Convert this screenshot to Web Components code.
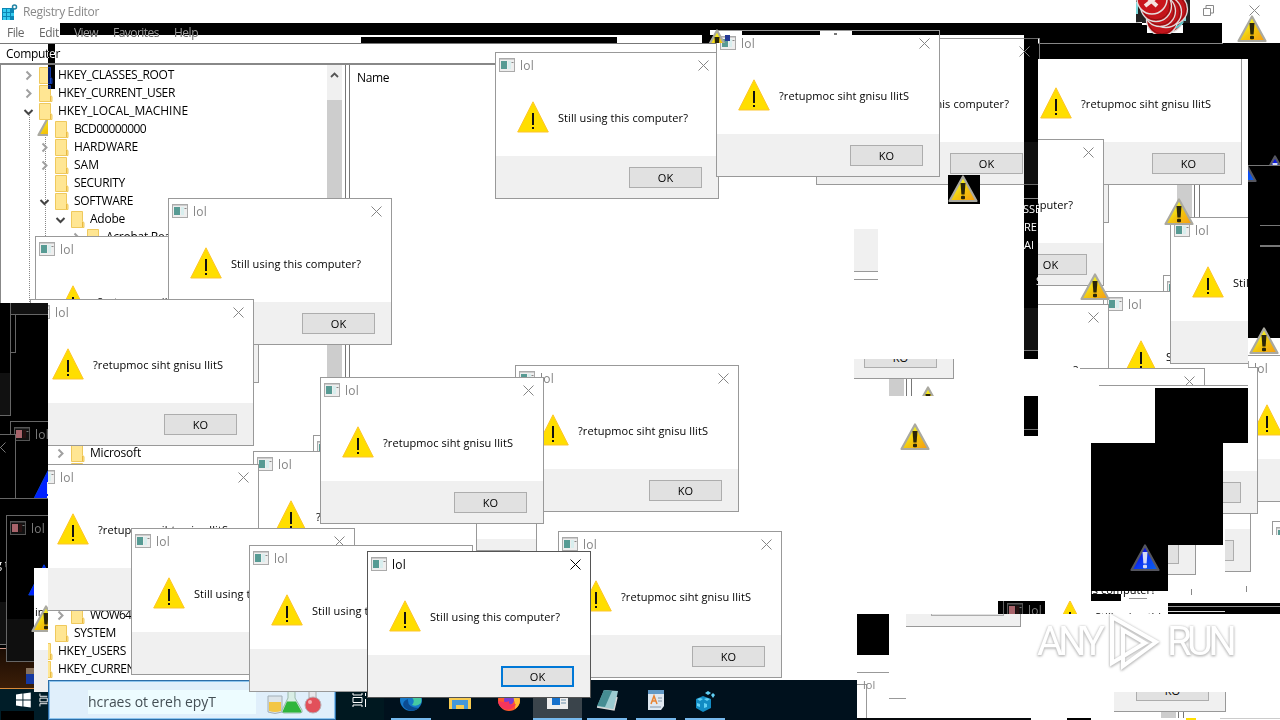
<!DOCTYPE html>
<html lang="en">
<head>
<meta charset="utf-8">
<title>Registry Editor</title>
<style>
  body {
    margin: 0;
    width: 1280px;
    height: 720px;
    overflow: hidden;
    background: #fff;
    font: 12px/16px "Open Sans", "Noto Sans", sans-serif;
    color: #000;
  }
</style>
</head>
<body>
<glitch-desktop></glitch-desktop>

<script>
// Text stretched or tightened to an exact width with letter-spacing
class FitText extends HTMLElement {
  constructor() {
    super();
    this.attachShadow({ mode: 'open' });
    this.shadowRoot.innerHTML = `<style>:host { display: inline-block; flex: none; white-space: nowrap; }</style><slot></slot>`;
  }

  connectedCallback() {
    const target = Number(this.getAttribute('w'));
    const length = this.textContent.length;
    if (!target || !length) return;
    const natural = this.getBoundingClientRect().width;
    this.style.letterSpacing = `${(target - natural) / length}px`;
  }
}
customElements.define('fit-text', FitText);

// Base for everything that sits freely on the desktop.
// x, y, w, h place it; clip="x1 y1 x2 y2" cuts it in desktop coordinates.
class DesktopItem extends HTMLElement {
  constructor() {
    super();
    this.attachShadow({ mode: 'open' });
  }

  connectedCallback() {
    this.render();
    this.place();
  }

  num(name, fallback = 0) {
    return this.hasAttribute(name) ? Number(this.getAttribute(name)) : fallback;
  }

  place() {
    const x = this.num('x');
    const y = this.num('y');
    const w = this.num('w', this.constructor.w);
    const h = this.num('h', this.constructor.h);
    Object.assign(this.style, {
      position: 'absolute',
      left: `${x}px`,
      top: `${y}px`,
      width: `${w}px`,
      height: `${h}px`
    });
    if (this.hasAttribute('clip')) {
      const [x1, y1, x2, y2] = this.getAttribute('clip').split(' ').map(Number);
      const sides = [y1 - y, x + w - x2, y + h - y2, x1 - x].map((n) => `${Math.max(0, n)}px`);
      this.style.clipPath = `inset(${sides.join(' ')})`;
    }
  }
}

// Plain rectangle; "invert" flips whatever is below it
class ScreenPatch extends DesktopItem {
  render() {
    const invert = this.hasAttribute('invert');
    if (invert) this.style.mixBlendMode = 'difference';
    this.shadowRoot.innerHTML = `
      <style>
        :host { display: block; box-sizing: border-box; background: ${invert ? '#fff' : this.getAttribute('fill') || '#000'}; }
      </style>
    `;
  }
}
customElements.define('screen-patch', ScreenPatch);

class TextScrap extends DesktopItem {
  render() {
    this.shadowRoot.innerHTML = `
      <style>
        :host { display: block; font-size: 11px; color: ${this.getAttribute('color') || '#000'}; white-space: nowrap; }
      </style>
      <slot></slot>
    `;
  }
}
TextScrap.w = 150;
TextScrap.h = 16;
customElements.define('text-scrap', TextScrap);

class MessageBox extends DesktopItem {
  render() {
    const active = this.hasAttribute('active');
    const backwards = this.hasAttribute('backwards');
    if (this.hasAttribute('negative')) this.style.filter = 'invert(1)';
    this.shadowRoot.innerHTML = `
      <style>
        :host {
          display: flex;
          flex-direction: column;
          box-sizing: border-box;
          border: 1px solid ${active ? '#555' : '#999'};
          background: #fff;
          overflow: hidden;
        }
        header {
          display: flex;
          align-items: center;
          height: 24px;
          padding: 0 9px 0 3px;
          color: ${active ? '#000' : '#858585'};
        }
        header fit-text { margin: 1px auto 0 5px; }
        main {
          display: flex;
          flex: 1;
          align-items: center;
          padding: 1px 0 0 21px;
          gap: 9px;
          font-size: 11px;
        }
        main fit-text { padding-top: 2px; }
        footer {
          display: flex;
          justify-content: flex-end;
          box-sizing: border-box;
          height: 42px;
          padding: 11px 16px 0 0;
          background: #f0f0f0;
        }
        .button {
          box-sizing: border-box;
          width: 73px;
          height: 21px;
          border: ${active ? '2px solid #0078d7' : '1px solid #adadad'};
          background: #e1e1e1;
          font-size: 11px;
          line-height: ${active ? 18 : 20}px;
          text-align: center;
        }
      </style>
      <header>
        <svg width="16" height="14" viewBox="0 0 16 14">
          <rect x=".5" y=".5" width="15" height="13" fill="#eee" stroke="#aaa"/>
          <path d="M1 1.5h14" stroke="#ccc"/>
          <rect x="2" y="3" width="6" height="8" fill="#579b94"/>
          <rect x="9" y="3" width="3" height="8" fill="#d8eeee"/>
          <path d="M12.500 4.500h2" stroke="#888"/>
        </svg>
        <fit-text w="14">lol</fit-text>
        <svg width="11" height="11" viewBox="0 0 11 11"><path d="M.5.5l10 10M10.500.5l-10 10" stroke="currentColor" fill="none"/></svg>
      </header>
      <main>
        <svg width="32" height="32" viewBox="0 0 32 32">
          <path d="M16 .8L31.300 31H.700z" fill="#ffde00" stroke="#fdc52c"/>
          <path d="M16 12v12M16 26v2" stroke="#111" stroke-width="2"/>
        </svg>
        <fit-text w="130">${backwards ? '?retupmoc siht gnisu llitS' : 'Still using this computer?'}</fit-text>
      </main>
      <footer><div class="button">${backwards ? 'KO' : 'OK'}</div></footer>
    `;
  }
}
MessageBox.w = 224;
MessageBox.h = 147;
customElements.define('message-box', MessageBox);

// Glossy warning triangle, the old cursor-trail icon
class WarningSign extends DesktopItem {
  render() {
    if (this.hasAttribute('negative')) this.style.filter = 'invert(1)';
    this.shadowRoot.innerHTML = `
      <style>
        :host { display: block; }
        svg { display: block; }
      </style>
      <svg width="30" height="28" viewBox="0 0 30 28">
        <defs>
          <linearGradient id="g" x1="0" y1="0" x2="1" y2="1">
            <stop offset=".3" stop-color="#f4ee22"/>
            <stop offset=".55" stop-color="#f3c60c"/>
            <stop offset="1" stop-color="#f59a16"/>
          </linearGradient>
        </defs>
        <path d="M15 1.500L28.500 26H1.500z" fill="url(#g)" stroke="#aaa9a0" stroke-width="2.200" stroke-linejoin="round"/>
        <path d="M12.500 8h5l-.9 11.500h-3.200z" fill="#2a2508"/>
        <rect x="13" y="20.700" width="4" height="3.600" rx="1" fill="#2a2508"/>
      </svg>
    `;
  }
}
WarningSign.w = 30;
WarningSign.h = 28;
customElements.define('warning-sign', WarningSign);

class ErrorPile extends DesktopItem {
  render() {
    const rings = [[33, 17], [27, 20], [37, 9], [31, 12], [25, 11], [21, 6]];
    this.shadowRoot.innerHTML = `
      <style>:host { display: block; overflow: hidden; }</style>
      <svg width="56" height="34" viewBox="0 0 56 34">
        <path d="M1 0h54v23H1z" fill="#222"/>
        <path d="M2 2v12M50 2v19" stroke="#7bd9dc" stroke-width="2"/>
        <path d="M0 22h7v3h5v8h36v-8z" fill="#fff"/>
        ${rings.map(([x, y]) => `<circle cx="${x}" cy="${y}" r="15.500" fill="#c3141b" stroke="#ddd" stroke-width="1.300"/><circle cx="${x}" cy="${y}" r="13.800" fill="none" stroke="#8b0f10"/>`).join('')}
        <circle cx="17" cy="-1" r="15" fill="#c9161c" stroke="#e6dede" stroke-width="1.500"/>
        <path d="M10-5l12 11M24-5L10 6" stroke="#f6e4df" stroke-width="4"/>
        <path d="M41 28l7-6" stroke="#58c9cc" stroke-width="2"/>
      </svg>
    `;
  }
}
customElements.define('error-pile', ErrorPile);

class TreeRow extends HTMLElement {
  constructor() {
    super();
    this.attachShadow({ mode: 'open' });
  }

  connectedCallback() {
    const level = Number(this.getAttribute('level') || 0);
    const arrows = {
      closed: '<path d="M3.500 2.500l4 4-4 4" stroke="#a0a0a0" stroke-width="2" fill="none"/>',
      open: '<path d="M1.500 5l4 4 4-4" stroke="#444" stroke-width="2" fill="none"/>'
    };
    this.shadowRoot.innerHTML = `
      <style>
        :host { display: flex; align-items: center; height: 18px; padding-left: ${22 + level * 16}px; }
        svg { flex: none; }
        .folder { margin: 0 5px 0 5px; }
      </style>
      <svg width="11" height="12" viewBox="0 0 11 12">${arrows[this.getAttribute('arrow')] || ''}</svg>
      <svg class="folder" width="14" height="17" viewBox="0 0 14 17">
        <path d="M.5.5h11v10l1.500 1v5H.5z" fill="#ffe693" stroke="#efc95d"/>
        <path d="M11.500 11v5" stroke="#e9b93f"/>
      </svg>
      <fit-text w="${this.getAttribute('w') || ''}">${this.textContent}</fit-text>
    `;
  }
}
customElements.define('tree-row', TreeRow);

class RegistryEditor extends HTMLElement {
  constructor() {
    super();
    this.attachShadow({ mode: 'open' });
    this.shadowRoot.innerHTML = `
      <style>
        :host { display: flex; flex-direction: column; width: 1280px; height: 680px; background: #fff; }
        .title { display: flex; align-items: center; box-sizing: border-box; height: 24px; padding: 0 20px 0 2px; gap: 5px; color: #888; }
        .title fit-text { margin-right: auto; }
        .buttons { display: flex; gap: 35px; align-items: center; padding-bottom: 3px; }
        nav { display: flex; height: 19px; padding-left: 7px; gap: 15px; color: #666; line-height: 18px; }
        .address { box-sizing: border-box; height: 22px; border-top: 1px solid #777; border-bottom: 2px solid #888; padding: 2px 0 0 6px; }
        .panes { display: flex; flex: 1; min-height: 0; }
        .tree {
          box-sizing: border-box;
          width: 327px;
          border-left: 1px solid #888;
          padding-top: 1px;
          background: repeating-linear-gradient(#888 0 1px, transparent 1px 2px) 28px 50px / 1px 100% no-repeat,
            repeating-linear-gradient(#888 0 1px, transparent 1px 2px) 44px 70px / 1px 100% no-repeat;
          overflow: hidden;
        }
        .gap { height: 198px; }
        .gap.short { height: 126px; }
        .scroll { width: 15px; background: #cdcdcd; }
        .scroll svg { display: block; background: #f0f0f0; }
        .split { box-sizing: border-box; width: 5px; margin-left: 3px; border: solid #777; border-width: 0 1px; }
        .list { padding: 5px 0 0 7px; }
      </style>
      <div class="title">
        <svg width="16" height="17" viewBox="0 0 16 17">
          <path d="M0 4h12v12H0z" fill="#0b86b5"/>
          <path d="M1 5h3v3H1zM5 5h3v3H5zM1 9h3v3H1zM5 9h3v3H5zM9 9h3v3H9zM1 13h3v3H1zM5 13h3v3H5z" fill="#35cbef"/>
          <circle cx="12.500" cy="3" r="2" fill="none" stroke="#2283a4" stroke-width="1.500"/>
        </svg>
        <fit-text w="76">Registry Editor</fit-text>
        <div class="buttons">
          <svg width="11" height="11" viewBox="0 0 11 11"><path d="M.5 3.500h7v7h-7zM3 3V.5h7.500V8H8" fill="none" stroke="#888"/></svg>
          <svg width="11" height="11" viewBox="0 0 11 11"><path d="M.5.5l10 10M10.500.5l-10 10" stroke="#888"/></svg>
        </div>
      </div>
      <nav>
        <fit-text w="17">File</fit-text><fit-text w="20">Edit</fit-text><fit-text w="24">View</fit-text><fit-text w="46">Favorites</fit-text><fit-text w="24">Help</fit-text>
      </nav>
      <div class="address"><fit-text w="54">Computer</fit-text></div>
      <div class="panes">
        <div class="tree">
          <tree-row arrow="closed" w="116">HKEY_CLASSES_ROOT</tree-row>
          <tree-row arrow="closed" w="117">HKEY_CURRENT_USER</tree-row>
          <tree-row arrow="open" w="130">HKEY_LOCAL_MACHINE</tree-row>
          <tree-row level="1" w="72">BCD00000000</tree-row>
          <tree-row level="1" arrow="closed" w="64">HARDWARE</tree-row>
          <tree-row level="1" arrow="closed" w="25">SAM</tree-row>
          <tree-row level="1" w="51">SECURITY</tree-row>
          <tree-row level="1" arrow="open" w="59">SOFTWARE</tree-row>
          <tree-row level="2" arrow="open" w="35">Adobe</tree-row>
          <tree-row level="3" arrow="closed" w="83">Acrobat Reader</tree-row>
          <div class="gap"></div>
          <tree-row level="2" arrow="closed" w="51">Microsoft</tree-row>
          <tree-row level="2"></tree-row>
          <div class="gap short"></div>
          <tree-row level="2" arrow="closed" w="80">WOW6432Node</tree-row>
          <tree-row level="1" w="42">SYSTEM</tree-row>
          <tree-row w="68">HKEY_USERS</tree-row>
          <tree-row w="130">HKEY_CURRENT_CONFIG</tree-row>
        </div>
        <div class="scroll"><svg width="15" height="35" viewBox="0 0 15 35"><path d="M4 12l3.500-3.500L11 12" fill="none" stroke="#555" stroke-width="1.800"/></svg></div>
        <div class="split"></div>
        <div class="list"><fit-text w="32">Name</fit-text></div>
      </div>
    `;
  }
}
customElements.define('registry-editor', RegistryEditor);

class TaskBar extends DesktopItem {
  render() {
    this.shadowRoot.innerHTML = `
      <style>
        :host { display: flex; align-items: stretch; background: #00111d; overflow: hidden; }
        .start { width: 48px; display: flex; align-items: center; gap: 8px; box-sizing: border-box; padding-left: 16px; background: #001d28; }
        .search {
          box-sizing: border-box;
          width: 288px;
          border: 1px solid #2c6ea8;
          outline: 1px solid #8cc4ee;
          outline-offset: -2px;
          background: #e0effb;
          display: flex;
          align-items: center;
          justify-content: space-between;
          padding: 3px 4px 0 39px;
          font-size: 14px;
          color: #444f55;
        }
        .search span { display: block; width: 168px; background: #edfcff; line-height: 24px; }
        .view { width: 48px; display: flex; align-items: center; justify-content: center; background: #001820; }
        .app { width: 49px; display: flex; align-items: center; justify-content: center; background: linear-gradient(#76b9ed, #76b9ed) center bottom / 40px 2px no-repeat; }
        .view + .app { margin-left: 2px; }
        .app.plain { background: none; }
        .app.current { background: linear-gradient(#76b9ed, #76b9ed) center bottom / 100% 2px no-repeat #3a444b; }
      </style>
      <div class="start">
        <svg width="16" height="16" viewBox="0 0 16 16"><path d="M0 2l7-1v6.500H0zM8 1l8-1v7.500H8zM0 8.500h7V15l-7-1zM8 8.500h8V16l-8-1z" fill="#fff"/></svg>
        <svg width="10" height="14" viewBox="0 0 10 14"><path d="M1 0v3h8M1 14v-3h8M1 5h8v4H1z" fill="none" stroke="#fff"/></svg>
      </div>
      <div class="search">
        <span><fit-text w="128">hcraes ot ereh epyT</fit-text></span>
        <svg width="66" height="28" viewBox="0 0 66 28">
          <path d="M3 8h14v16q-7 3-14 0z" fill="#dce4e9" stroke="#a2aeb7"/>
          <path d="M4 14h12v9q-6 2-12 0z" fill="#f3c644"/>
          <path d="M22 2h7v8l7 12q1 3-2 3H18q-3 0-2-3l6-12z" transform="translate(1 0)" fill="#d9eee5" stroke="#9ab8ab"/>
          <path d="M22 13h9l5 9q1 2-1 2H19q-2 0-1-2z" transform="translate(0 .5)" fill="#2fb53c"/>
          <path d="M44 1h7v9h-7z" fill="#e7e7ec" stroke="#aaa"/>
          <circle cx="48" cy="17" r="8" fill="#e2505a" stroke="#b9adb3"/>
          <circle cx="45" cy="14" r="2" fill="#f6adb0"/>
        </svg>
      </div>
      <div class="view"><svg width="16" height="14" viewBox="0 0 16 14"><path d="M1 0v2h9V0M1 14v-2h9v2M1 4.500h9v5H1zM13.500 0v3M13.500 6v8" fill="none" stroke="#fff"/></svg></div>
      <div class="app">
        <svg width="24" height="24" viewBox="0 0 24 24">
          <circle cx="12" cy="12" r="11" fill="#1679c9"/>
          <path d="M2 8Q7-1 16 3q8 4 6 12-4 4-9 2 4-5-1-8-5-2-10-1z" fill="#45c9a2"/>
          <path d="M9 11q-1 9 11 9-8 6-15-1-3-5 4-8z" fill="#0b4b91"/>
        </svg>
      </div>
      <div class="app plain">
        <svg width="22" height="20" viewBox="0 0 22 20">
          <path d="M0 1h8l2 3h12v15H0z" fill="#f8cc50"/>
          <path d="M3 10h16v9h-4v-4H7v4H3z" fill="#4598d8"/>
        </svg>
      </div>
      <div class="app plain">
        <svg width="24" height="24" viewBox="0 0 24 24">
          <circle cx="12" cy="12" r="11" fill="#ff5a2b"/>
          <path d="M12 1q10 2 11 11 0 6-5 9 2-9-6-13z" fill="#ffbd35"/>
          <circle cx="12" cy="12" r="5" fill="#7a3dd2"/>
          <path d="M1 13q8 2 11 0-1 5 7 3-6 9-14 4-4-3-4-7z" fill="#f7365c"/>
        </svg>
      </div>
      <div class="app current">
        <svg width="21" height="18" viewBox="0 0 21 18">
          <path d="M0 0h21v18H0z" fill="#eee"/>
          <path d="M5 3h8v11H5z" fill="#1671cc"/>
          <path d="M14 6h5M14 9h5M14 12h5" stroke="#6b8faa"/>
        </svg>
      </div>
      <div class="app">
        <svg width="24" height="24" viewBox="0 0 24 24">
          <path d="M9 2l14 1-4 19-17-3z" fill="#9ccbd0"/>
          <path d="M9 2l8 1-7 16-8-1z" fill="#458d93"/>
          <path d="M2 19l17 3 3-13" fill="none" stroke="#d8d8d8" stroke-width="1.500"/>
        </svg>
      </div>
      <div class="app">
        <svg width="18" height="22" viewBox="0 0 18 22">
          <path d="M1 1h16v16l-3 4H1z" fill="#dfe8f1"/>
          <path d="M1 1h16v4H1z" fill="#639ac6"/>
          <path d="M4 15l3-8 3 8M5 12h4" stroke="#e88332" stroke-width="1.500" fill="none"/>
          <path d="M11 9h4M11 12h4M3 18h11" stroke="#8297aa"/>
        </svg>
      </div>
      <div class="app">
        <svg width="20" height="23" viewBox="0 0 20 23">
          <path d="M1 10l7-3 8 3v9l-8 4-7-4z" fill="#128cc4"/>
          <path d="M2 10l3-1 3 1-3 2zM9 10l3-1 3 1-3 2zM2 14l3 1v3l-3-1zM9 14l3 1v3l-3 1zM10 4l3-2 3 2-3 2zM16 6l2-2 2 2-2 3z" fill="#62d1f5"/>
        </svg>
      </div>
    `;
  }
}
customElements.define('task-bar', TaskBar);

class SandboxMark extends DesktopItem {
  render() {
    this.shadowRoot.innerHTML = `
      <style>
        :host {
          display: flex;
          align-items: center;
          justify-content: space-between;
          color: #fff;
          font: 40px/56px "Roboto", "Open Sans", sans-serif;
          filter: drop-shadow(0 1px 1px #bbb) drop-shadow(0 0 1px #ccc);
        }
      </style>
      <fit-text w="63">ANY</fit-text>
      <svg width="54" height="60" viewBox="0 0 54 60">
        <path d="M5 5l44 25L16 54V18l22 13L5 51z" fill="none" stroke="#fff" stroke-width="4"/>
      </svg>
      <fit-text w="65">RUN</fit-text>
    `;
  }
}
customElements.define('sandbox-mark', SandboxMark);

class GlitchDesktop extends HTMLElement {
  constructor() {
    super();
    this.attachShadow({ mode: 'open' });
    this.shadowRoot.innerHTML = `
      <style>
        :host { display: block; position: relative; width: 1280px; height: 720px; overflow: hidden; background: #fff; isolation: isolate; }
      </style>
      <registry-editor></registry-editor>
      <screen-patch x="495" y="62" w="785" h="4" fill="#fff"></screen-patch>
      <task-bar x="0" y="680" w="857" h="40"></task-bar>

      <!-- top bar smears -->
      <screen-patch invert x="48" y="44" w="7" h="45"></screen-patch>
      <screen-patch x="340" y="42" w="21" h="1" fill="#fff"></screen-patch>
      <screen-patch x="361" y="35" w="861" h="2" fill="#fff"></screen-patch>
      <screen-patch x="361" y="37" w="256" h="6"></screen-patch>
      <screen-patch x="702" y="35" w="15" h="8"></screen-patch>
      <screen-patch x="1038" y="35" w="184" h="8"></screen-patch>

      <!-- right-hand windows -->
      <screen-patch x="1103" y="184" w="6" h="39" fill="#999"></screen-patch>
      <screen-patch x="1104" y="184" w="4" h="38" fill="#f0f0f0"></screen-patch>
      <screen-patch x="1177" y="184" w="15" h="34" fill="#cdcdcd"></screen-patch>
      <screen-patch x="1194" y="184" w="1" h="34" fill="#777"></screen-patch>
      <screen-patch x="1199" y="184" w="1" h="34" fill="#777"></screen-patch>
      <message-box x="1018" y="38" backwards clip="1038 59 1248 200"></message-box>
      <message-box x="816" y="38"></message-box>
      <screen-patch x="1038" y="59" w="2" h="126" fill="#fff"></screen-patch>
      <message-box x="880" y="139" clip="1038 139 1104 286"></message-box>
      <message-box x="1163" y="275" clip="1163 275 1171 291"></message-box>
      <message-box x="1103" y="291" clip="1103 291 1200 368"></message-box>
      <message-box x="885" y="304" clip="1038 304 1109 368"></message-box>
      <screen-patch x="1038" y="359" w="26" h="9" fill="#fff"></screen-patch>
      <message-box x="1170" y="217" clip="1170 217 1248 364"></message-box>
      <message-box x="981" y="368" clip="1080 368 1205 385"></message-box>
      <screen-patch x="1099" y="385" w="149" h="1" fill="#999"></screen-patch>
      <message-box x="1229" y="355" clip="1248 355 1280 502"></message-box>
      <message-box x="1034" y="367" backwards clip="1223 388 1258 514"></message-box>
      <screen-patch x="1248" y="368" w="9" h="21" fill="#fff"></screen-patch>
      <screen-patch x="1257" y="367" w="1" h="22" fill="#999"></screen-patch>
      <screen-patch x="1248" y="367" w="10" h="1" fill="#999"></screen-patch>
      <message-box x="1027" y="425" backwards clip="1225 514 1251 572"></message-box>
      <message-box x="972" y="428" backwards clip="1168 545 1196 575"></message-box>
      <message-box x="1272" y="521" clip="1272 521 1280 535"></message-box>
      <screen-patch x="1155" y="388" w="93" h="55"></screen-patch>
      <screen-patch x="1091" y="443" w="132" h="102"></screen-patch>
      <screen-patch x="1091" y="545" w="77" h="46"></screen-patch>
      <warning-sign negative x="1130" y="544"></warning-sign>

      <!-- black margins -->
      <screen-patch invert x="1024" y="35" w="14" h="324"></screen-patch>
      <screen-patch x="1024" y="185" w="14" h="174"></screen-patch>
      <screen-patch x="1024" y="308" w="14" h="42" fill="#111"></screen-patch>
      <screen-patch x="1024" y="350" w="14" h="1" fill="#777"></screen-patch>
      <screen-patch x="1024" y="198" w="14" h="1" fill="#888"></screen-patch>
      <text-scrap x="1023" y="201" w="17" clip="1024 201 1040 217" color="#fff">SSE</text-scrap>
      <text-scrap x="1024" y="219" w="14" color="#fff">RE</text-scrap>
      <text-scrap x="1024" y="237" w="14" color="#fff">AI</text-scrap>
      <text-scrap x="1036" y="273" w="2" color="#fff" clip="1036 273 1038 289">S</text-scrap>
      <screen-patch x="1024" y="396" w="14" h="40"></screen-patch>
      <screen-patch x="1024" y="429" w="14" h="1" fill="#777"></screen-patch>
      <screen-patch x="1038" y="43" w="242" h="16"></screen-patch>
      <screen-patch x="1038" y="43" w="185" h="1" fill="#888"></screen-patch>
      <screen-patch x="1039" y="38" w="1" h="21" fill="#777"></screen-patch>
      <screen-patch x="1248" y="59" w="32" h="279"></screen-patch>
      <screen-patch x="1248" y="165" w="32" h="1" fill="#777"></screen-patch>
      <screen-patch x="1260" y="225" w="20" h="1" fill="#777"></screen-patch>
      <screen-patch x="1260" y="245" w="20" h="2" fill="#777"></screen-patch>
      <warning-sign negative x="1227" y="155" clip="1248 166 1260 184"></warning-sign>
      <warning-sign negative x="1260" y="155" clip="1268 155 1280 165"></warning-sign>

      <!-- fragments in the blank middle -->
      <screen-patch x="854" y="229" w="24" h="42" fill="#f0f0f0"></screen-patch>
      <screen-patch x="854" y="271" w="24" h="1" fill="#999"></screen-patch>
      <screen-patch x="854" y="279" w="24" h="1" fill="#999"></screen-patch>
      <message-box x="730" y="232" backwards clip="854 359 954 379"></message-box>
      <screen-patch x="889" y="379" w="15" h="17" fill="#cdcdcd"></screen-patch>
      <screen-patch x="906" y="379" w="1" h="17" fill="#777"></screen-patch>
      <screen-patch x="911" y="379" w="1" h="17" fill="#777"></screen-patch>
      <warning-sign x="913" y="386" clip="913 386 943 396"></warning-sign>
      <warning-sign x="900" y="423"></warning-sign>
      <screen-patch x="948" y="175" w="32" h="29"></screen-patch>
      <warning-sign x="948" y="175"></warning-sign>

      <!-- lower right -->
      <text-scrap x="1090" y="582" w="80" clip="1091 591 1165 597">is computer?</text-scrap>
      <screen-patch x="1091" y="594" w="30" h="7"></screen-patch>
      <screen-patch x="1129" y="598" w="18" h="1" fill="#999"></screen-patch>
      <screen-patch x="1191" y="589" w="1" h="6" fill="#888"></screen-patch>
      <screen-patch x="1246" y="586" w="1" h="6" fill="#888"></screen-patch>
      <message-box x="1032" y="551" clip="1050 601 1170 614"></message-box>
      <screen-patch x="998" y="601" w="47" h="13"></screen-patch>
      <message-box negative x="1003" y="597" clip="1003 601 1042 614"></message-box>
      <screen-patch x="1168" y="603" w="112" h="11"></screen-patch>
      <screen-patch x="1168" y="606" w="112" h="1" fill="#999"></screen-patch>
      <screen-patch x="1168" y="611" w="57" h="1" fill="#ddd"></screen-patch>
      <message-box x="797" y="480" backwards clip="906 614 1021 627"></message-box>
      <screen-patch x="857" y="614" w="32" h="41"></screen-patch>
      <screen-patch x="857" y="672" w="32" h="1" fill="#999"></screen-patch>
      <screen-patch x="857" y="684" w="10" h="1" fill="#999"></screen-patch>
      <screen-patch x="866" y="684" w="1" h="34" fill="#999"></screen-patch>
      <screen-patch x="889" y="698" w="17" h="1" fill="#999"></screen-patch>
      <text-scrap x="863" y="677" w="20" color="#888">lol</text-scrap>
      <screen-patch x="857" y="718" w="174" h="2" fill="#07090c"></screen-patch>
      <screen-patch x="1067" y="718" w="24" h="2"></screen-patch>
      <message-box x="1002" y="565" backwards clip="1114 692 1226 712"></message-box>
      <screen-patch x="1161" y="712" w="15" h="6" fill="#cdcdcd"></screen-patch>
      <screen-patch x="1178" y="712" w="1" h="6" fill="#777"></screen-patch>
      <screen-patch x="1183" y="712" w="1" h="6" fill="#777"></screen-patch>
      <screen-patch x="1186" y="718" w="10" h="2" fill="#ffde00"></screen-patch>
      <screen-patch x="1220" y="718" w="60" h="1" fill="#ccc"></screen-patch>
      <sandbox-mark x="1037" y="614" w="195" h="56"></sandbox-mark>

      <!-- left and centre stack -->
      <message-box x="35" y="236" backwards></message-box>
      <message-box x="168" y="198"></message-box>
      <message-box x="30" y="299" backwards></message-box>
      <message-box x="313" y="435" clip="313 435 321 452"></message-box>
      <message-box x="253" y="451" backwards></message-box>
      <message-box x="35" y="464" backwards></message-box>
      <message-box x="131" y="528"></message-box>
      <screen-patch x="476" y="523" w="61" h="30" fill="#999"></screen-patch>
      <screen-patch x="477" y="523" w="59" h="16" fill="#fff"></screen-patch>
      <screen-patch x="477" y="539" w="59" h="14" fill="#f0f0f0"></screen-patch>
      <screen-patch x="477" y="550" w="43" h="1" fill="#999"></screen-patch>
      <message-box x="558" y="531" backwards></message-box>
      <message-box x="515" y="365" backwards></message-box>
      <message-box x="320" y="377" backwards></message-box>
      <message-box x="249" y="545"></message-box>
      <message-box x="367" y="551" active></message-box>
      <message-box x="495" y="52"></message-box>
      <message-box x="716" y="30" backwards></message-box>

      <!-- negative strip on the left edge -->
      <screen-patch x="0" y="303" w="48" h="377"></screen-patch>
      <screen-patch x="10" y="303" w="38" h="11" fill="#111"></screen-patch>
      <screen-patch x="10" y="314" w="38" h="1" fill="#666"></screen-patch>
      <screen-patch x="10" y="303" w="1" h="112" fill="#666"></screen-patch>
      <screen-patch x="15" y="315" w="1" h="38" fill="#666"></screen-patch>
      <screen-patch x="10" y="352" w="6" h="1" fill="#666"></screen-patch>
      <screen-patch x="0" y="373" w="10" h="42" fill="#111"></screen-patch>
      <screen-patch x="0" y="415" w="11" h="1" fill="#666"></screen-patch>
      <message-box negative x="10" y="421" clip="10 421 48 498"></message-box>
      <message-box negative x="-208" y="434" clip="0 434 16 498"></message-box>
      <screen-patch x="0" y="498" w="48" h="1" fill="#666"></screen-patch>
      <screen-patch x="0" y="602" w="6" h="42" fill="#111"></screen-patch>
      <screen-patch x="0" y="644" w="6" h="1" fill="#777"></screen-patch>
      <screen-patch x="0" y="648" w="48" h="40" fill="linear-gradient(#1a0c03, #3c1e08)"></screen-patch>
      <screen-patch x="0" y="648" w="6" h="1" fill="#c98"></screen-patch>
      <message-box negative x="6" y="515" clip="6 515 48 662"></message-box>
      <text-scrap x="-4" y="556" w="10" color="#fff" clip="0 556 7 572">g t</text-scrap>
      <screen-patch x="26" y="668" w="8" h="16" fill="linear-gradient(#86715c 40%, #1538a0 40%)"></screen-patch>
      <screen-patch x="0" y="688" w="34" h="1" fill="#d98a3a"></screen-patch>
      <screen-patch x="1" y="711" w="33" h="9"></screen-patch>
      <screen-patch x="34" y="568" w="14" h="82" fill="#fff"></screen-patch>
      <screen-patch x="34" y="650" w="14" h="42" fill="#f0f0f0"></screen-patch>
      <text-scrap x="35" y="604" w="13" clip="35 604 48 620">in</text-scrap>
      <warning-sign x="31" y="605" clip="31 605 48 632"></warning-sign>
      <screen-patch x="38" y="120" w="10" h="16" fill="#fff"></screen-patch>
      <warning-sign x="37" y="109" clip="37 120 48 136"></warning-sign>

      <!-- strips and icons over everything -->
      <screen-patch invert x="60" y="23" w="650" h="12"></screen-patch>
      <screen-patch x="710" y="23" w="512" h="7"></screen-patch>
      <screen-patch x="742" y="31" w="78" h="4"></screen-patch>
      <screen-patch x="852" y="31" w="87" h="4"></screen-patch>
      <screen-patch x="834" y="33" w="3" h="2" fill="#777"></screen-patch>
      <screen-patch x="940" y="30" w="282" h="5"></screen-patch>
      <warning-sign x="702" y="29" clip="708 29 728 43"></warning-sign>
      <screen-patch x="725" y="35" w="5" h="6" fill="#253a96"></screen-patch>
      <error-pile x="1135" y="0" w="56" h="34"></error-pile>
      <warning-sign x="1237" y="15"></warning-sign>
      <warning-sign x="1164" y="198"></warning-sign>
      <warning-sign x="1080" y="273"></warning-sign>
      <warning-sign x="1249" y="327"></warning-sign>
    `;
  }
}
customElements.define('glitch-desktop', GlitchDesktop);
</script>
</body>
</html>
